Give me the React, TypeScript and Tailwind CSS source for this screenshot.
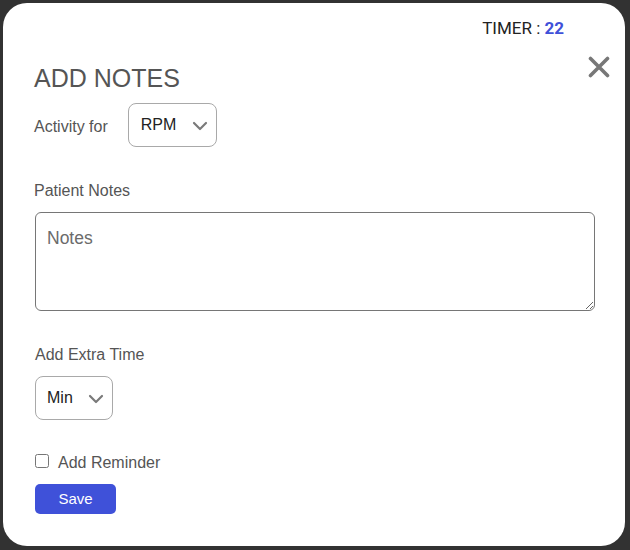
import { useState } from "react";

function Chevron({ className }: { className?: string }) {
  return (
    <svg
      className={className}
      width="16"
      height="10"
      viewBox="0 0 16 10"
      fill="none"
      stroke="#7a7a7a"
      strokeWidth="2.2"
      strokeLinecap="round"
      strokeLinejoin="round"
    >
      <path d="M2 2 L8 8 L14 2" />
    </svg>
  );
}

function SelectBox({
  value,
  options,
  className,
  selectClass,
}: {
  value: string;
  options: string[];
  className: string;
  selectClass: string;
}) {
  const [current, setCurrent] = useState(value);
  return (
    <div className={`relative h-[44px] ${className}`}>
      <select
        value={current}
        onChange={(e) => setCurrent(e.target.value)}
        className={`h-full w-full appearance-none rounded-[8px] border border-[#a9a9a9] bg-white text-[16px] text-[#222] outline-none ${selectClass}`}
      >
        {options.map((o) => (
          <option key={o}>{o}</option>
        ))}
      </select>
      <Chevron className="pointer-events-none absolute right-[9px] top-[18px]" />
    </div>
  );
}

export default function App() {
  return (
    <div className="h-[550px] w-[630px] bg-[#323232] pl-[3px] pt-[3px] font-['Liberation_Sans',Arial,sans-serif]">
      <div className="relative h-[543px] w-[622px] rounded-[24px] bg-white pl-[32px] pr-[30px]">
        <div className="flex justify-end pt-[15px] pr-[31px]">
          <p className="font-['Roboto',sans-serif] text-[17px] leading-[20px] text-[#222]">
            TIMER : <span className="font-bold text-[#3f51d9]">22</span>
          </p>
        </div>

        <button className="absolute right-[15px] top-[53px]" aria-label="Close">
          <svg width="22" height="22" viewBox="0 0 22 22" stroke="#777" strokeWidth="3.6" strokeLinecap="round">
            <path d="M2.5 2.5 L19.5 19.5 M19.5 2.5 L2.5 19.5" />
          </svg>
        </button>

        <h2 className="mt-[25px] -ml-px text-[25px] leading-[30px] text-[#555]">ADD NOTES</h2>

        <div className="mt-[10px] flex items-center gap-[20px]">
          <label className="-ml-px pt-[4px] text-[16px] leading-[18px] text-[#555]">Activity for</label>
          <SelectBox value="RPM" options={["RPM", "CCM", "BHI"]} className="w-[89px]" selectClass="pl-[12px]" />
        </div>

        <label className="mt-[35px] -ml-px block text-[16px] leading-[18px] text-[#555]">Patient Notes</label>
        <textarea
          placeholder="Notes"
          className="mt-[12px] block h-[99px] w-[560px] rounded-[6px] border border-[#767676] px-[11px] py-[15px] text-[17.5px] leading-[20px] text-[#222] outline-none placeholder:text-[#6b6b6b]"
        />

        <label className="mt-[35px] block text-[16px] leading-[18px] text-[#555]">Add Extra Time</label>
        <div className="mt-[12px]">
          <SelectBox value="Min" options={["Min", "5", "10", "15"]} className="w-[78px]" selectClass="pl-[11px]" />
        </div>

        <label className="mt-[31px] flex h-[20px] items-center gap-[9px] text-[16px] text-[#555]">
          <input type="checkbox" className="m-0 h-[14px] w-[14px]" />
          <span className="mt-[3px]">Add Reminder</span>
        </label>

        <button className="mt-[13px] h-[30px] w-[81px] rounded-[5px] bg-[#3f51d9] text-[15px] text-white">
          Save
        </button>
      </div>
    </div>
  );
}
